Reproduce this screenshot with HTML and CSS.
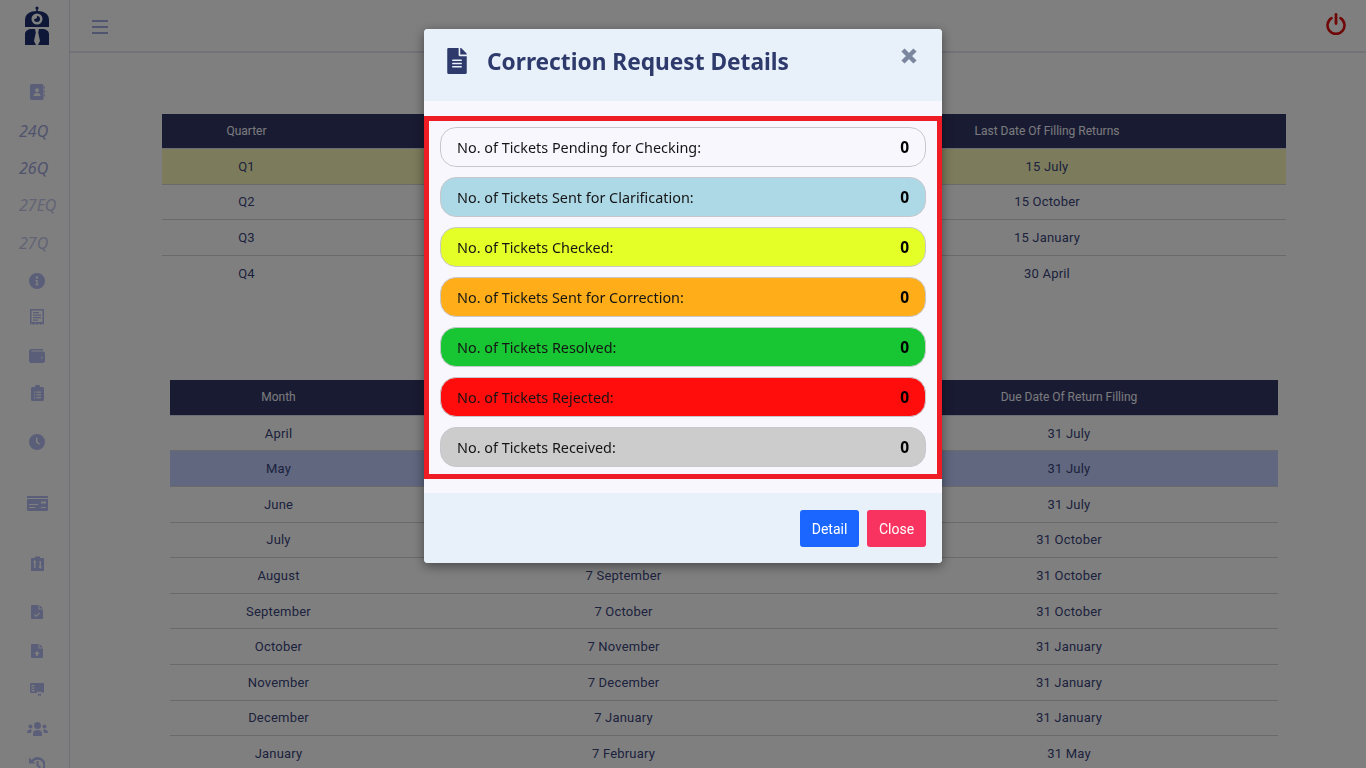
FILE: index.html
```html
<!DOCTYPE html>
<html>
	<head>
		<title>Correction Request Details</title>
		<link rel="stylesheet" href="styles.css">
	</head>
	<body>
		<div class="layout">
			<div class="sidebar">
				<div class="logo">
					<svg width="28" height="40" viewBox="0 0 28 40">
						<circle cx="14" cy="2" r="1.6"/>
						<rect x="13.2" y="2" width="1.6" height="4"/>
						<path d="M2 21V14C2 8 7 5 14 5s12 3 12 9v7z"/>
						<circle cx="14" cy="13" r="5.5" fill="#fff"/>
						<path d="M14 10a3 3 0 1 1-3 3c1.500.5 3.500-1 3-3z"/>
						<path d="M2 39V28c0-3 3-5 7-5h3l.8 3.500L11 35l2 4zM26 39V28c0-3-3-5-7-5h-3l-.8 3.500L17 35l-2 4z"/>
					</svg>
				</div>
				<nav class="nav-list">
					<div class="nav-item">
						<svg width="15" height="16" viewBox="0 0 15 16"><path fill-rule="evenodd" d="M2 0h10a1.500 1.500 0 0 1 1.500 1.500v13A1.500 1.500 0 0 1 12 16H2a2 2 0 0 1-2-2V2a2 2 0 0 1 2-2zm5 4.200a2 2 0 1 0 0 4 2 2 0 0 0 0-4zM3.500 12h7c0-2-1.500-3-3.500-3s-3.500 1-3.500 3z"/><path d="M14 2.500h1v2h-1zM14 6.500h1v2h-1zM14 10.500h1v2h-1z"/></svg>
					</div>
					<div class="nav-item nav-text">24Q</div>
					<div class="nav-item nav-text">26Q</div>
					<div class="nav-item nav-text nav-faded">27EQ</div>
					<div class="nav-item nav-text nav-faded">27Q</div>
					<div class="nav-item">
						<svg width="16" height="16" viewBox="0 0 16 16"><path fill-rule="evenodd" d="M8 0a8 8 0 1 1 0 16A8 8 0 0 1 8 0zm0 3.200a1.300 1.300 0 1 0 0 2.600 1.300 1.300 0 0 0 0-2.600zM6.500 7v1.200h.8v2.900h-.8v1.200h3v-1.200h-.8V7z"/></svg>
					</div>
					<div class="nav-item">
						<svg width="14" height="16" viewBox="0 0 14 16"><path fill-rule="evenodd" d="M0 0h14v16l-1.750-1.500L10.500 16l-1.750-1.500L7 16l-1.750-1.500L3.500 16l-1.750-1.500L0 16zm1.500 1.500V13h11V1.500zM3 3h6v1.300H3zm0 2.500h8v1.300H3zM3 8h8v1.300H3zm0 2.500h5v1.300H3z"/></svg>
					</div>
					<div class="nav-item">
						<svg width="16" height="14" viewBox="0 0 16 14"><path fill-rule="evenodd" d="M2 0h12v1.500H2.500v1H14a2 2 0 0 1 2 2V12a2 2 0 0 1-2 2H2a2 2 0 0 1-2-2V2a2 2 0 0 1 2-2zm11 8a.800.800 0 1 0 0 1.600.800.800 0 0 0 0-1.600z"/></svg>
					</div>
					<div class="nav-item">
						<svg width="13" height="16" viewBox="0 0 13 16"><path fill-rule="evenodd" d="M1.500 2H4a2.500 2.500 0 0 1 5 0h2.500A1.500 1.500 0 0 1 13 3.500v11a1.500 1.500 0 0 1-1.500 1.500h-10A1.500 1.500 0 0 1 0 14.500v-11A1.500 1.500 0 0 1 1.500 2zM3 6.500v1.200h1.200V6.500zm2.500 0v1.200H10V6.500zM3 9.300v1.200h1.200V9.300zm2.500 0v1.200H10V9.300zM3 12v1.200h1.200V12zm2.500 0v1.200H10V12z"/></svg>
					</div>
					<div class="nav-item">
						<svg width="16" height="16" viewBox="0 0 16 16"><path fill-rule="evenodd" d="M8 0a8 8 0 1 1 0 16A8 8 0 0 1 8 0zM7 3.500V8.500l3.200 2.300.9-1.100L8.500 7.800V3.500z"/></svg>
					</div>
					<div class="nav-item">
						<svg width="21" height="15" viewBox="0 0 21 15"><path fill-rule="evenodd" d="M0 0h21v2H0zM0 3h21v10.500A1.500 1.500 0 0 1 19.500 15h-18A1.500 1.500 0 0 1 0 13.500zm14 2.500v2h5v-2zM2 8v1h9V8zm0 3v1h6v-1zm12 0v1h5v-1z"/></svg>
					</div>
					<div class="nav-item">
						<svg width="13" height="15" viewBox="0 0 13 15"><path fill-rule="evenodd" d="M0 2h4V.500h5V2h4v13H0zm3.800 2L1.800 6.500h1.300V12h1.400V6.500h1.300zm5.400 9 2-2.500H9.900V5H8.500v5.500H7.200z"/></svg>
					</div>
					<div class="nav-item">
						<svg width="12" height="14" viewBox="0 0 12 14"><path fill-rule="evenodd" d="M1 0h6.500v4.500H12V13a1 1 0 0 1-1 1H1a1 1 0 0 1-1-1V1a1 1 0 0 1 1-1zm7.500 0L12 3.500H8.500zM8.300 7.500 5.300 10.500 3.800 9l-.8.800 2.300 2.300 3.800-3.800z"/></svg>
					</div>
					<div class="nav-item">
						<svg width="12" height="14" viewBox="0 0 12 14"><path fill-rule="evenodd" d="M1 0h6.500v4.500H12V13a1 1 0 0 1-1 1H1a1 1 0 0 1-1-1V1a1 1 0 0 1 1-1zm7.500 0L12 3.500H8.500zM6 7 3.200 10h1.900v2h1.800v-2h1.900z"/></svg>
					</div>
					<div class="nav-item">
						<svg width="14" height="13" viewBox="0 0 14 13"><path fill-rule="evenodd" d="M1 0h12a1 1 0 0 1 1 1v8.500h-2.500L10.500 8H7V10H1a1 1 0 0 1-1-1V1a1 1 0 0 1 1-1zm.500 2v1.200h3V2zm0 2.500v1.200h3V4.500zm0 2.500v1.200h3V7z"/><path d="M9.500 2.500l1 .8 1.200-.3.400 1.200 1.200.5-.3 1.200.3 1.200-1.200.5-.4 1.200-1.200-.3-1 .8-1-.8-1.200.3-.4-1.200L5.700 7.100 6 5.900l-.3-1.200 1.200-.5.400-1.200 1.200.3zM8 10.500l1.500.8 1.500-.8V13l-1.500-.8L8 13z"/></svg>
					</div>
					<div class="nav-item">
						<svg width="21" height="14" viewBox="0 0 21 14"><circle cx="10.500" cy="3.500" r="3.500"/><circle cx="3.500" cy="4.500" r="2"/><circle cx="17.500" cy="4.500" r="2"/><path d="M6 14v-2.500C6 9 8 8 10.500 8s4.500 1 4.500 3.500V14zM0 10.500C0 8.500 1.500 7.500 3.500 7.500c.700 0 1.200.2 1.700.5C4.300 9 4 10 4 11H.5zM21 10.500c0-2-1.500-3-3.500-3-.7 0-1.200.2-1.700.5.900 1 1.200 2 1.200 3h3.500z"/></svg>
					</div>
					<div class="nav-item">
						<svg width="16" height="16" viewBox="0 0 16 16"><path d="M8.500 0a8 8 0 1 1-5.300 14l1.500-1.800A5.600 5.600 0 1 0 4.400 4.600l1.800 1.800H0V.200l2.700 2.700A8 8 0 0 1 8.500 0zM7.500 4h2v4l2.500 1.800-1.100 1.500L7.500 9z"/></svg>
					</div>
				</nav>
			</div>
			<div class="main">
				<header class="topbar">
					<div class="menu-icon"><span></span><span></span><span></span></div>
					<svg class="power-icon" width="20" height="22" viewBox="0 0 20 22">
						<path d="M5.500 5.200a8.500 8.500 0 1 0 9 0" fill="none" stroke="#e01010" stroke-width="2.600" stroke-linecap="round"/>
						<path d="M10 1.500v9" stroke="#e01010" stroke-width="2.800" stroke-linecap="round"/>
					</svg>
				</header>
				<div class="content">
					<table class="data-table quarter-table">
						<colgroup><col class="q-col-1"><col class="q-col-2"><col class="q-col-3"></colgroup>
						<thead><tr><th>Quarter</th><th></th><th>Last Date Of Filling Returns</th></tr></thead>
						<tbody>
							<tr class="row-yellow"><td>Q1</td><td></td><td>15 July</td></tr>
							<tr><td>Q2</td><td></td><td>15 October</td></tr>
							<tr><td>Q3</td><td></td><td>15 January</td></tr>
							<tr class="row-last"><td>Q4</td><td></td><td>30 April</td></tr>
						</tbody>
					</table>
					<table class="data-table month-table">
						<colgroup><col class="m-col-1"><col class="m-col-2"><col class="m-col-3"></colgroup>
						<thead><tr><th>Month</th><th></th><th>Due Date Of Return Filling</th></tr></thead>
						<tbody>
							<tr><td>April</td><td></td><td>31 July</td></tr>
							<tr class="row-blue"><td>May</td><td></td><td>31 July</td></tr>
							<tr><td>June</td><td></td><td>31 July</td></tr>
							<tr><td>July</td><td></td><td>31 October</td></tr>
							<tr><td>August</td><td>7 September</td><td>31 October</td></tr>
							<tr><td>September</td><td>7 October</td><td>31 October</td></tr>
							<tr><td>October</td><td>7 November</td><td>31 January</td></tr>
							<tr><td>November</td><td>7 December</td><td>31 January</td></tr>
							<tr><td>December</td><td>7 January</td><td>31 January</td></tr>
							<tr><td>January</td><td>7 February</td><td>31 May</td></tr>
						</tbody>
					</table>
				</div>
			</div>
		</div>

		<div class="overlay">
			<div class="modal">
				<div class="modal-header">
					<svg class="doc-icon" width="20" height="26" viewBox="0 0 384 512"><path d="M224 136V0H24C10.700 0 0 10.700 0 24v464c0 13.300 10.700 24 24 24h336c13.300 0 24-10.700 24-24V160H248c-13.200 0-24-10.800-24-24zm64 236c0 6.600-5.400 12-12 12H108c-6.600 0-12-5.400-12-12v-8c0-6.600 5.400-12 12-12h168c6.600 0 12 5.400 12 12v8zm0-64c0 6.600-5.400 12-12 12H108c-6.600 0-12-5.400-12-12v-8c0-6.600 5.400-12 12-12h168c6.600 0 12 5.400 12 12v8zm0-72v8c0 6.600-5.400 12-12 12H108c-6.600 0-12-5.400-12-12v-8c0-6.600 5.400-12 12-12h168c6.600 0 12 5.400 12 12zm96-114.100v6.100H256V0h6.100c6.400 0 12.500 2.500 17 7l97.900 98c4.500 4.500 7 10.600 7 16.900z"/></svg>
					<h2 class="modal-title">Correction Request Details</h2>
					<svg class="modal-close" width="18" height="18" viewBox="0 0 18 18"><path d="M3 3l12 12M15 3L3 15" fill="none" stroke="#7b869f" stroke-width="4.500"/></svg>
				</div>
				<div class="modal-body">
					<div class="ticket-list">
						<div class="ticket-row ticket-pending"><span>No. of Tickets Pending for Checking:</span><b>0</b></div>
						<div class="ticket-row ticket-clarify"><span>No. of Tickets Sent for Clarification:</span><b>0</b></div>
						<div class="ticket-row ticket-checked"><span>No. of Tickets Checked:</span><b>0</b></div>
						<div class="ticket-row ticket-correct"><span>No. of Tickets Sent for Correction:</span><b>0</b></div>
						<div class="ticket-row ticket-resolved"><span>No. of Tickets Resolved:</span><b>0</b></div>
						<div class="ticket-row ticket-rejected"><span>No. of Tickets Rejected:</span><b>0</b></div>
						<div class="ticket-row ticket-received"><span>No. of Tickets Received:</span><b>0</b></div>
					</div>
				</div>
				<div class="modal-footer">
					<button class="btn btn-detail">Detail</button>
					<button class="btn btn-close">Close</button>
				</div>
			</div>
		</div>
	</body>
</html>
```

FILE: styles.css
```css
html, body {
	margin: 0px;
	height: 768px;
	overflow: hidden;
	background-color: white;
}
body {
	font-family: "Noto Sans", sans-serif;
	color: #2f3a6a;
}
.layout {
	display: flex;
	height: 768px;
}
.sidebar {
	width: 69px;
	flex: none;
	border-right: 1px solid #dcdfe8;
	overflow: hidden;
	fill: #b6bcf0;
}
.logo {
	height: 73px;
	padding: 6px 0px 0px 5px;
	box-sizing: border-box;
	fill: #1c2f70;
	display: flex;
	justify-content: center;
}
.nav-list {
	display: grid;
	grid-template-rows: 38px 40px 34px 40px 36px 40px 32px 46px 28px 70px 52px 68px 30px 48px 28px 52px 20px;
	align-items: center;
}
.nav-item {
	display: flex;
	align-items: center;
	justify-content: center;
	padding-left: 5px;
}
.nav-text {
	justify-content: flex-start;
	padding-left: 19px;
	font-style: italic;
	font-size: 16px;
	color: #a0a6da;
}
.nav-faded {
	color: #c4c8ea;
}
.main {
	flex: 1;
	min-width: 0;
}
.topbar {
	height: 53px;
	box-sizing: border-box;
	border-bottom: 2px solid #e3e6ee;
	display: flex;
	align-items: center;
	justify-content: space-between;
	padding: 0px 20px 0px 22px;
}
.menu-icon {
	width: 16px;
	display: flex;
	flex-direction: column;
	gap: 4px;
	margin-top: 2px;
}
.menu-icon span {
	height: 2px;
	background-color: #a0a8e0;
}
.power-icon {
	margin-top: -4px;
}
.content {
	display: flex;
	flex-direction: column;
	align-items: center;
	padding-top: 61px;
	margin-left: 12px;
}
.data-table {
	border-collapse: collapse;
	table-layout: fixed;
	font-family: Roboto, sans-serif;
	font-size: 13px;
	letter-spacing: 0.2px;
	color: #39447a;
	text-align: center;
}
.data-table th {
	height: 34px;
	padding: 0px;
	background-color: #323666;
	color: #f2f4f8;
	font-weight: 400;
	font-size: 12px;
	letter-spacing: 0px;
	border-bottom: 1px solid #dde;
}
.data-table td {
	height: 35.6px;
	box-sizing: border-box;
	padding: 0px;
	border-bottom: 1px solid #d4d4d4;
}
.data-table .row-last td {
	border-bottom: none;
}
.quarter-table {
	width: 1124px;
}
.q-col-1 { width: 169px; }
.q-col-2 { width: 477px; }
.q-col-3 { width: 478px; }
.month-table {
	width: 1108px;
	margin-top: 89px;
}
.month-table th {
	height: 35px;
}
.m-col-1 { width: 217px; }
.m-col-2 { width: 473px; }
.m-col-3 { width: 418px; }
.row-yellow td {
	background-color: #f8f8b8;
}
.row-blue td {
	background-color: #c0ceff;
}
.overlay {
	position: fixed;
	top: 0px;
	left: 0px;
	right: 0px;
	bottom: 0px;
	background-color: rgba(0, 0, 0, 0.5);
}
.modal {
	position: absolute;
	left: 424px;
	top: 29px;
	width: 518px;
	border-radius: 4px;
	overflow: hidden;
	background-color: #f8f7fd;
	box-shadow: 0px 3px 12px rgba(0, 0, 0, 0.45);
}
.modal-header {
	height: 72px;
	box-sizing: border-box;
	background-color: #e8f0fa;
	display: flex;
	align-items: flex-start;
	padding: 19px 24px 0px 23px;
	color: #2e3a6b;
	fill: #2e3a6b;
}
.modal-title {
	margin: 0px 0px 0px 20px;
	flex: 1;
	font-size: 22.700px;
	font-weight: 700;
	line-height: 28px;
}
.modal-close {
	margin-top: -1px;
}
.modal-body {
	padding: 15px 0px 14px;
}
.ticket-list {
	border: 5px solid #ee1c25;
	padding: 6px 11px 7px;
	display: flex;
	flex-direction: column;
	gap: 10px;
}
.ticket-row {
	height: 40px;
	box-sizing: border-box;
	border: 1px solid #c8c8cc;
	border-radius: 16px;
	display: flex;
	align-items: center;
	justify-content: space-between;
	padding: 0px 16px;
	font-size: 14.400px;
	color: #151515;
}
.ticket-row b {
	color: black;
	font-size: 15.500px;
}
.ticket-pending { background-color: #f8f7fd; }
.ticket-clarify { background-color: #add8e6; }
.ticket-checked { background-color: #e4ff27; }
.ticket-correct { background-color: #ffae1a; }
.ticket-resolved { background-color: #18c532; }
.ticket-rejected { background-color: #ff0c0c; }
.ticket-received { background-color: #cccccc; }
.modal-footer {
	height: 70px;
	box-sizing: border-box;
	background-color: #e8f0fa;
	display: flex;
	justify-content: flex-end;
	gap: 8px;
	padding: 17px 16px 0px;
}
.btn {
	width: 59px;
	height: 37px;
	border: none;
	border-radius: 3px;
	color: white;
	font-family: Roboto, sans-serif;
	font-size: 14px;
}
.btn-detail { background-color: #1a66ff; }
.btn-close { background-color: #f9335f; }
```
